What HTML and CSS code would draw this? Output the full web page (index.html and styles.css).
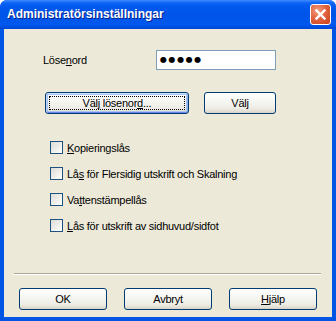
FILE: index.html
```html
<!DOCTYPE html>
<html lang="sv">
<head>
<meta charset="utf-8">
<link rel="stylesheet" href="styles.css">
</head>
<body>
<div class="window">
  <div class="titlebar">
    <span class="title">Administratörsinställningar</span>
    <span class="close">
      <svg width="13" height="13" viewBox="0 0 13 13"><path d="M2.5 2.5 L10.5 10.5 M10.5 2.5 L2.5 10.5" stroke="#fff" stroke-width="2.4" stroke-linecap="square"/></svg>
    </span>
  </div>
  <div class="client">
    <div class="pwrow">
      <span class="label">Löse<u>n</u>ord</span>
      <div class="input"><span class="dots">●●●●●</span></div>
    </div>
    <div class="btnrow">
      <button class="btn focused wide"><span class="focus">Välj lösenor<u>d</u>...</span></button>
      <button class="btn narrow">Välj</button>
    </div>
    <div class="checks">
      <div class="check"><span class="box"></span><span><u>K</u>opieringslås</span></div>
      <div class="check"><span class="box"></span><span>Lå<u>s</u> för Flersidig utskrift och Skalning</span></div>
      <div class="check"><span class="box"></span><span>Va<u>t</u>tenstämpellås</span></div>
      <div class="check"><span class="box"></span><span><u>L</u>ås för utskrift av sidhuvud/sidfot</span></div>
    </div>
    <div class="sep"></div>
    <div class="bottom">
      <button class="btn std">OK</button>
      <button class="btn std">Avbryt</button>
      <button class="btn std"><u>H</u>jälp</button>
    </div>
  </div>
</div>
</body>
</html>
```
FILE: styles.css
```css
* { box-sizing: border-box; }
html, body { margin: 0; padding: 0; background: #fff; }
body { font-family: "Liberation Sans", Arial, sans-serif; font-size: 11px; letter-spacing: -0.25px; color: #000; }
.window {
  width: 336px; height: 321px;
  display: flex; flex-direction: column;
  background: #0055e5;
  border-radius: 7px 7px 0 0;
  overflow: hidden;
}
.titlebar {
  height: 29px; flex: none;
  display: flex; align-items: center; justify-content: space-between;
  padding: 0 5px 0 7px;
  background: linear-gradient(#3d8dff 0, #0d63f5 3px, #0058ee 7px, #0054e8 50%, #0058ee 85%, #0047d4 100%);
}
.title {
  color: #fff; font-weight: bold; font-size: 12px; letter-spacing: 0;
  text-shadow: 1px 1px 0 #0a1e8a;
  margin-top: -1px;
}
.close {
  width: 21px; height: 21px;
  border: 1px solid #fff; border-radius: 3px;
  background: radial-gradient(circle at 35% 30%, #f2a084 0, #e26440 45%, #c8401c 100%);
  display: flex; align-items: center; justify-content: center;
}
.client {
  flex: 1;
  margin: 0 4px 4px 4px;
  background: #ece9d8;
  display: flex; flex-direction: column;
}
.pwrow {
  margin-top: 21px; height: 20px;
  display: flex; align-items: center;
  padding-left: 39px;
}
.label { width: 113px; }
.input {
  width: 120px; height: 20px;
  border: 1px solid #7f9db9; background: #fff;
  display: flex; align-items: center; padding-left: 3px;
}
.dots { font-family: "DejaVu Sans", sans-serif; font-size: 8px; letter-spacing: 1.6px; line-height: 1; }
.btn {
  font-family: inherit; font-size: 11px; letter-spacing: inherit; color: #000;
  border: 1px solid #003c74; border-radius: 3px;
  background: linear-gradient(#ffffff 0, #f6f6f3 40%, #eeede6 75%, #e2ded3 92%, #d6d0c5 100%);
  padding: 0; margin: 0; height: 22px;
  display: flex; align-items: center; justify-content: center;
}
.btn.focused {
  box-shadow: inset 0 1px 0 #cee7ff, inset 1px 0 0 #bcd4f6, inset -1px 0 0 #89ade4, inset 0 -1px 0 #6982ee, inset 0 0 0 2px #a9c4f2;
  padding: 3px;
}
.focus {
  flex: 1; align-self: stretch;
  border: 1px dotted #000;
  display: flex; align-items: center; justify-content: center;
}
.btnrow { margin-top: 22px; display: flex; padding-left: 41px; gap: 15px; }
.wide { width: 144px; }
.narrow { width: 72px; }
.checks { margin-top: 27px; display: flex; flex-direction: column; gap: 13px; padding-left: 46px; }
.check { height: 13px; display: flex; align-items: center; gap: 4px; }
.box {
  width: 13px; height: 13px; flex: none;
  border: 1px solid #1c5180;
  background: linear-gradient(135deg, #dcdcd7 0, #f4f4f0 70%, #ffffff 100%);
}
.sep {
  margin: 41px 11px 0 10px; height: 2px;
  border-top: 1px solid #aca899; border-bottom: 1px solid #fff;
}
.bottom { margin-top: 13px; display: flex; gap: 17px; padding-left: 15px; }
.std { width: 88px; }
u { text-decoration: underline; text-underline-offset: 1px; }
```
